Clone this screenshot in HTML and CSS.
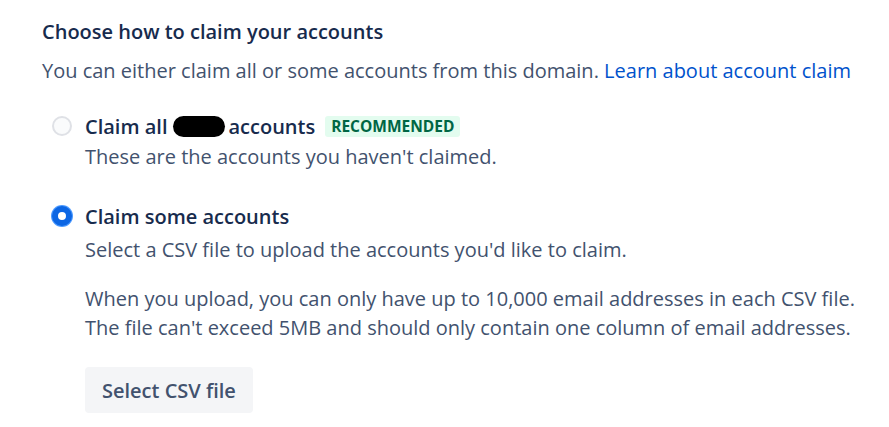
FILE: index.html
```html
<!DOCTYPE html>
<html lang="en">
<head>
<meta charset="utf-8">
<title>Claim accounts</title>
<link rel="stylesheet" href="styles.css">
</head>
<body>
<main class="panel">
  <h2 class="title">Choose how to claim your accounts</h2>
  <p class="intro">You can either claim all or some accounts from this domain. <a class="link" href="#">Learn about account claim</a></p>

  <div class="option option-first">
    <span class="radio"></span>
    <div class="option-body">
      <div class="option-label">Claim all <span class="redact"></span> accounts <span class="badge">RECOMMENDED</span></div>
      <div class="option-desc">These are the accounts you haven't claimed.</div>
    </div>
  </div>

  <div class="option option-second">
    <span class="radio radio-checked"></span>
    <div class="option-body">
      <div class="option-label">Claim some accounts</div>
      <div class="option-desc desc-second">Select a CSV file to upload the accounts you'd like to claim.</div>
      <p class="note">When you upload, you can only have up to 10,000 email addresses in each CSV file.<br>The file can't exceed 5MB and should only contain one column of email addresses.</p>
      <button class="btn" type="button">Select CSV file</button>
    </div>
  </div>
</main>
</body>
</html>
```
FILE: styles.css
```css
html, body {
  margin: 0;
  padding: 0;
  background: #ffffff;
}
body {
  font-family: "Open Sans", "Noto Sans", sans-serif;
  color: #42526e;
  font-size: 20px;
  line-height: 29px;
}
.panel {
  padding: 17px 0 0 42px;
}
.title {
  margin: 0;
  font-size: 20px;
  font-weight: 600;
  color: #172b4d;
  line-height: 29px;
}
.intro {
  margin: 10px 0 0;
}
.link {
  color: #0052cc;
  text-decoration: none;
}
.option {
  display: flex;
  align-items: flex-start;
  padding-left: 10px;
  gap: 13px;
}
.option-first {
  margin-top: 27px;
}
.option-second {
  margin-top: 31px;
}
.radio {
  flex: none;
  width: 20px;
  height: 20px;
  box-sizing: border-box;
  border-radius: 50%;
  border: 2px solid #dfe1e6;
  background: #fafbfc;
  margin-top: 4px;
}
.radio-checked {
  border: 6px solid #0c66e4;
  background: #ffffff;
  box-shadow: 0 0 0 1px #4c9aff;
}
.option-label {
  color: #172b4d;
  font-weight: 600;
  display: flex;
  align-items: center;
}
.redact {
  display: inline-block;
  width: 52px;
  height: 21px;
  border-radius: 11px;
  background: #000;
  margin: 0 3px 0 6px;
}
.badge {
  margin-left: 10px;
  background: #e3fcef;
  color: #006644;
  font-size: 15.5px;
  font-weight: 700;
  line-height: 21px;
  padding: 0 6px;
  border-radius: 3px;
}
.option-desc {
  margin-top: 1px;
}
.desc-second {
  margin-top: 4px;
}
.note {
  margin: 20px 0 0;
}
.btn {
  margin-top: 25px;
  height: 46px;
  padding: 0 17px;
  border: none;
  border-radius: 4px;
  background: #f4f5f7;
  color: #42526e;
  font-family: inherit;
  font-size: 20px;
  font-weight: 600;
  cursor: pointer;
}
```
